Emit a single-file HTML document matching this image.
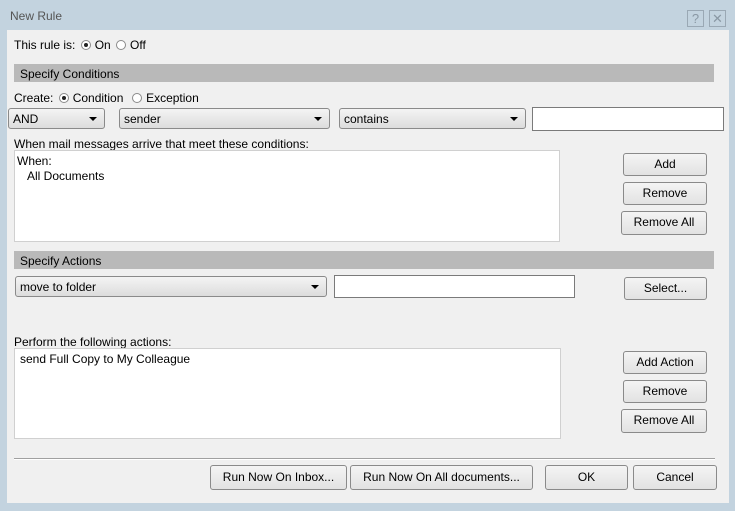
<!DOCTYPE html>
<html><head><style>
*{margin:0;padding:0;box-sizing:border-box}
body{width:735px;height:511px;background:#c3d3df;font-family:"Liberation Sans",sans-serif;font-size:12px;color:#000;position:relative;overflow:hidden}
.a{position:absolute;white-space:nowrap}
#in{position:absolute;left:7px;top:30px;width:722px;height:473px;background:#f0f0f0}
.bar{position:absolute;left:14px;width:700px;height:18px;background:#b9b9b9;padding:3px 0 0 6px}
.btn{position:absolute;border:1px solid #8a8a8a;border-radius:3px;background:linear-gradient(#f4f4f4,#e2e2e2);text-align:center;line-height:20px}
.dd{position:absolute;border:1px solid #8a8a8a;border-radius:3px;background:linear-gradient(#f4f4f4,#dcdcdc);padding-left:4px;line-height:21px}
.dd:after{content:"";position:absolute;right:7px;top:8px;border-left:4px solid transparent;border-right:4px solid transparent;border-top:4px solid #000}
.tb{position:absolute;border:1px solid #7a7a7a;background:#fff}
.lst{position:absolute;border:1px solid #d0d0d0;background:#fff}
.r{display:inline-block;width:10px;height:10px;border:1px solid #8a8a8a;border-radius:50%;background:#fff;vertical-align:-1px;position:relative;margin:0 4px 0 2px}
.r.on:after{content:"";position:absolute;left:2px;top:2px;width:4px;height:4px;border-radius:50%;background:#222}
.tbtn{position:absolute;top:10px;width:17px;height:17px;border:1px solid #9aa8b4;color:#8a98a4;text-align:center;line-height:15px;font-size:13px}
</style></head><body>
<div class="a" style="left:10px;top:9px;color:#555;font-size:12px">New Rule</div>
<div class="tbtn" style="left:687px">?</div>
<div class="tbtn" style="left:709px">✕</div>
<div id="in"></div>
<div class="a" style="left:14px;top:38px">This rule is: <span class="r on"></span>On <span class="r"></span>Off</div>
<div class="bar" style="top:64px">Specify Conditions</div>
<div class="a" style="left:14px;top:91px">Create: <span class="r on"></span>Condition &nbsp;<span class="r"></span>Exception</div>
<div class="dd" style="left:8px;top:108px;width:97px;height:21px">AND</div>
<div class="dd" style="left:119px;top:108px;width:211px;height:21px">sender</div>
<div class="dd" style="left:339px;top:108px;width:187px;height:21px">contains</div>
<div class="tb" style="left:532px;top:107px;width:192px;height:24px"></div>
<div class="a" style="left:14px;top:137px">When mail messages arrive that meet these conditions:</div>
<div class="lst" style="left:14px;top:150px;width:546px;height:92px"><div style="padding:3px 0 0 2px;line-height:15px">When:<br>&nbsp;&nbsp;&nbsp;All Documents</div></div>
<div class="btn" style="left:623px;top:153px;width:84px;height:23px">Add</div>
<div class="btn" style="left:623px;top:182px;width:84px;height:23px">Remove</div>
<div class="btn" style="left:621px;top:211px;width:86px;height:24px">Remove All</div>
<div class="bar" style="top:251px">Specify Actions</div>
<div class="dd" style="left:15px;top:276px;width:312px;height:21px">move to folder</div>
<div class="tb" style="left:334px;top:275px;width:241px;height:23px"></div>
<div class="btn" style="left:624px;top:277px;width:83px;height:23px">Select...</div>
<div class="a" style="left:14px;top:335px">Perform the following actions:</div>
<div class="lst" style="left:14px;top:348px;width:547px;height:91px"><div style="padding:3px 0 0 5px">send Full Copy to My Colleague</div></div>
<div class="btn" style="left:623px;top:351px;width:84px;height:23px">Add Action</div>
<div class="btn" style="left:623px;top:380px;width:84px;height:23px">Remove</div>
<div class="btn" style="left:621px;top:409px;width:86px;height:24px">Remove All</div>
<div class="a" style="left:14px;top:458px;width:701px;height:2px;border-top:1px solid #a0a0a0;border-bottom:1px solid #fff"></div>
<div class="btn" style="left:210px;top:465px;width:137px;height:25px;line-height:23px">Run Now On Inbox...</div>
<div class="btn" style="left:350px;top:465px;width:183px;height:25px;line-height:23px">Run Now On All documents...</div>
<div class="btn" style="left:545px;top:465px;width:83px;height:25px;line-height:23px">OK</div>
<div class="btn" style="left:633px;top:465px;width:84px;height:25px;line-height:23px">Cancel</div>
</body></html>
